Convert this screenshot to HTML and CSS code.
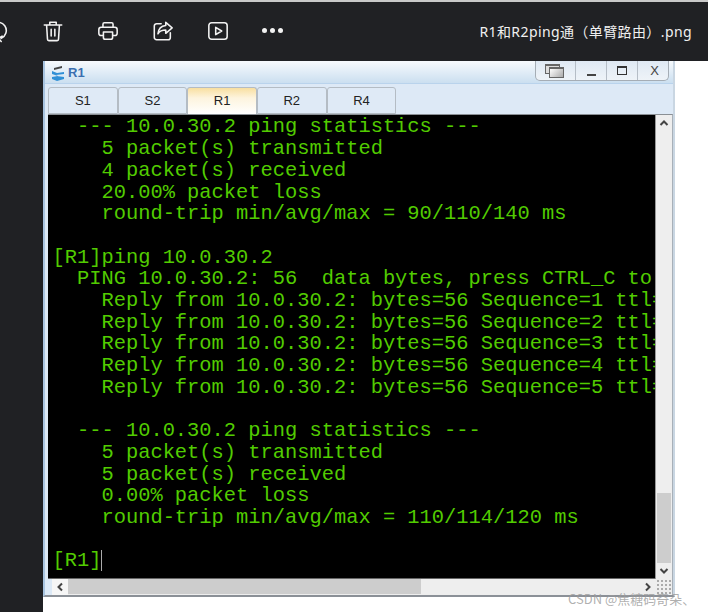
FILE: index.html
```html
<!DOCTYPE html>
<html lang="zh">
<head>
<meta charset="utf-8">
<title>R1</title>
<link rel="stylesheet" href="styles.css">
</head>
<body>
<header class="viewer-bar">
  <div class="tools">
    <svg class="ic" viewBox="0 0 24 24"><path d="M12 2.500a9 9 0 0 1 8.500 12 9 9 0 0 1-5 5.500M15.500 23.500l-3-3.500 4-2.500"/></svg>
    <svg class="ic" viewBox="0 0 24 24"><path d="M2.500 5.500h19M8.500 5.500V2.500h7V5.500M5 5.500l1 15.500a1.500 1.500 0 0 0 1.500 1.500h9a1.500 1.500 0 0 0 1.500-1.500l1-15.500M10 10v7.500M14 10v7.500"/></svg>
    <svg class="ic" viewBox="0 0 24 24"><path d="M6.500 8V4.500a1.500 1.500 0 0 1 1.500-1.500h8a1.500 1.500 0 0 1 1.500 1.500V8M6 17H4.500A2.500 2.500 0 0 1 2 14.500V10.500A2.500 2.500 0 0 1 4.500 8h15a2.500 2.500 0 0 1 2.500 2.500v4a2.500 2.500 0 0 1-2.500 2.500H18M7 13h10v6a2 2 0 0 1-2 2H9a2 2 0 0 1-2-2z"/></svg>
    <svg class="ic" viewBox="0 0 24 24"><path d="M10 4H5a2.500 2.500 0 0 0-2.500 2.500v12.500A2.500 2.500 0 0 0 5 21.500h12.500a2.500 2.500 0 0 0 2.500-2.500v-5M15 2.500l7 6-7 6v-3.500c-4 0-6.500 1-8.500 4 .5-5 3.500-8.500 8.500-9z"/></svg>
    <svg class="ic" viewBox="0 0 24 24"><rect x="2" y="3" width="20" height="18" rx="3"/><path d="M9.500 8l6.500 4-6.500 4z"/></svg>
    <div class="more"><i></i><i></i><i></i></div>
  </div>
  <div class="file-name">R1和R2ping通（单臂路由）.png</div>
</header>
<div class="stage">
  <aside class="side"></aside>
  <main class="canvas">
    <section class="window">
      <div class="titlebar">
        <svg class="logo" viewBox="0 0 14 16"><path class="logo-dark" d="M3 3l8-2v2l-8 2z"/><path class="logo-blue" d="M1 6l5 2 7-1v2l-8 1v1l8 1v2l-7 2-5-2v-2l6-1-6-2z"/></svg>
        <span class="title">R1</span>
        <div class="win-btns">
          <div class="win-btn wide"><span class="restore-a"></span><span class="restore-b"></span></div>
          <div class="win-btn"><span class="min"></span></div>
          <div class="win-btn"><span class="max"></span></div>
          <div class="win-btn close">X</div>
        </div>
      </div>
      <nav class="tabs">
        <div class="tab">S1</div>
        <div class="tab">S2</div>
        <div class="tab active">R1</div>
        <div class="tab">R2</div>
        <div class="tab">R4</div>
      </nav>
      <div class="console-wrap">
        <div class="console-row">
          <pre class="terminal">  --- 10.0.30.2 ping statistics ---
    5 packet(s) transmitted
    4 packet(s) received
    20.00% packet loss
    round-trip min/avg/max = 90/110/140 ms

[R1]ping 10.0.30.2
  PING 10.0.30.2: 56  data bytes, press CTRL_C to break
    Reply from 10.0.30.2: bytes=56 Sequence=1 ttl=254 time=120 ms
    Reply from 10.0.30.2: bytes=56 Sequence=2 ttl=254 time=120 ms
    Reply from 10.0.30.2: bytes=56 Sequence=3 ttl=254 time=110 ms
    Reply from 10.0.30.2: bytes=56 Sequence=4 ttl=254 time=110 ms
    Reply from 10.0.30.2: bytes=56 Sequence=5 ttl=254 time=110 ms

  --- 10.0.30.2 ping statistics ---
    5 packet(s) transmitted
    5 packet(s) received
    0.00% packet loss
    round-trip min/avg/max = 110/114/120 ms

[R1]<span class="caret"></span></pre>
          <div class="vscroll">
            <div class="arrow"><svg viewBox="0 0 10 8"><path d="M1.500 6L5 2.500 8.500 6"/></svg></div>
            <div class="vtrack"><div class="vthumb"></div></div>
            <div class="arrow"><svg viewBox="0 0 10 8"><path d="M1.500 2L5 5.500 8.500 2"/></svg></div>
          </div>
        </div>
        <div class="hscroll">
          <div class="arrow arrow-light"><svg viewBox="0 0 8 10"><path d="M6 1.500L2.500 5 6 8.500"/></svg></div>
          <div class="htrack"><div class="hthumb"></div></div>
          <div class="arrow"><svg viewBox="0 0 8 10"><path d="M2 1.500L5.500 5 2 8.500"/></svg></div>
          <div class="corner"></div>
        </div>
      </div>
    </section>
    <div class="watermark">CSDN @焦糖码奇朵、</div>
  </main>
</div>
</body>
</html>
```
FILE: styles.css
```css
* { box-sizing: border-box; }
html, body { margin: 0; height: 100%; overflow: hidden; }
body {
  width: 708px;
  height: 612px;
  background: #fff;
  font-family: "Liberation Sans", "Noto Sans CJK SC", sans-serif;
  display: flex;
  flex-direction: column;
}
.viewer-bar {
  height: 61px;
  flex: none;
  background: #202124;
  border-top: 2px solid #c9c9c9;
  display: flex;
  align-items: center;
  justify-content: space-between;
  padding: 0 16px 2px 0;
}
.tools { display: flex; align-items: center; margin-left: -13px; gap: 33px; }
.ic {
  width: 22px;
  height: 22px;
  flex: none;
  fill: none;
  stroke: #f2f2f2;
  stroke-width: 1.7;
  stroke-linecap: round;
  stroke-linejoin: round;
  overflow: visible;
}
.more { display: flex; gap: 3px; }
.more i { width: 5px; height: 5px; border-radius: 50%; background: #f2f2f2; }
.file-name { color: #f0f0f0; font: 14px "Noto Sans", "Noto Sans CJK SC", sans-serif; letter-spacing: .4px; }
.stage { flex: 1; display: flex; min-height: 0; }
.side { width: 43px; flex: none; background: #202124; }
.canvas { flex: 1; position: relative; background: #fff; }
.window {
  width: 632px;
  height: 536px;
  background: #dce9f6;
  display: flex;
  flex-direction: column;
  border-left: 2px solid #a8c4e0;
  border-bottom: 2px solid #8b9097;
  border-right: 2px solid #c9d6e2;
}
.titlebar {
  height: 22px;
  flex: none;
  background: linear-gradient(#f7fafd, #cbdff0);
  display: flex;
  align-items: center;
  padding-left: 6px;
  position: relative;
}
.logo { width: 14px; height: 16px; margin-top: 1px; }
.logo-dark { fill: #444; }
.logo-blue { fill: #2f8fd6; }
.title { color: #3b6fb0; font-size: 13px; font-weight: 700; margin-left: 3px; }
.win-btns {
  position: absolute;
  right: 4px;
  top: 0;
  height: 20px;
  display: flex;
  background: linear-gradient(#dfe9f3, #eef3f8);
  border: 1px solid #a5adb5;
  border-top: 0;
  border-radius: 0 0 5px 5px;
}
.win-btn {
  width: 31px;
  position: relative;
  display: flex;
  align-items: center;
  justify-content: center;
  border-left: 1px solid #b5bdc6;
}
.win-btn:first-child { border-left: 0; }
.win-btn.wide { width: 39px; }
.restore-a { position: absolute; left: 9px; top: 3px; width: 15px; height: 10px; border: 1px solid #666; border-top-width: 2px; background: #ddd; }
.restore-b { position: absolute; left: 13px; top: 6px; width: 15px; height: 11px; border: 1px solid #666; border-top-width: 2px; background: linear-gradient(135deg, #fff, #aaa); }
.min { width: 9px; height: 2px; background: #444; margin-top: 8px; }
.max { width: 10px; height: 9px; border: 1px solid #333; border-top-width: 2px; }
.close { font-size: 13px; color: #444; padding-left: 3px; }
.tabs {
  height: 31px;
  flex: none;
  display: flex;
  align-items: flex-start;
  background: #dde9f6;
  padding: 3px 0 0 3px;
  border-top: 1px solid #b9d3ec;
}
.tab {
  width: 69.67px;
  height: 27px;
  background: #dfeaf6;
  border: 1px solid #b4bcc4;
  border-radius: 3px 3px 0 0;
  font-size: 13px;
  color: #222;
  display: flex;
  align-items: center;
  justify-content: center;
}
.tab.active {
  background: linear-gradient(#f8dfa0 0, #fdf4de 10px, #fff 100%);
  border-bottom: 0;
  padding-bottom: 2px;
}
.console-wrap {
  flex: 1;
  min-height: 0;
  margin-left: 3px;
  display: flex;
  flex-direction: column;
  border-top: 1px solid #8a8f94;
  border-right: 1px solid #a8b0b8;
  background: #dce9f6;
}
.console-row { flex: 1; min-height: 0; display: flex; }
.terminal {
  flex: 1;
  min-width: 0;
  margin: 0;
  padding: 1.4px 0 0 4.5px;
  background: #000;
  color: #52cc00;
  font: 20.4px/21.7px "Liberation Mono", "Courier New", monospace;
  overflow: hidden;
  border-bottom: 1px solid #666;
  white-space: pre;
}
.caret { display: inline-block; width: 1px; height: 21px; background: #aaa; vertical-align: -5px; }
.vscroll { width: 17px; flex: none; display: flex; flex-direction: column; background: #eee; border-left: 1px solid #999; }
.vtrack { flex: 1; background: #eee; display: flex; flex-direction: column; justify-content: flex-end; padding: 0 1px; }
.vthumb { height: 70px; background: #cdcdcd; }
.arrow { width: 16px; height: 16px; display: flex; align-items: center; justify-content: center; flex: none; }
.arrow svg { width: 10px; height: 10px; fill: none; stroke: #444; stroke-width: 2; }
.arrow-light { background: #f6f6f6; }
.hscroll { height: 16px; flex: none; display: flex; background: #eee; margin-left: 4px; }
.htrack { flex: 1; background: #eee; }
.hthumb { width: 353px; height: 15px; background: #cdcdcd; }
.corner { width: 16px; background-image: radial-gradient(#aaa 1px, transparent 1.2px); background-size: 4px 4px; background-position: right bottom; background-repeat: repeat; }
.watermark {
  position: absolute;
  left: 525px;
  top: 528px;
  color: rgba(155,155,155,.8);
  font: 13px "Noto Sans CJK SC", sans-serif;
  white-space: nowrap;
}
```
